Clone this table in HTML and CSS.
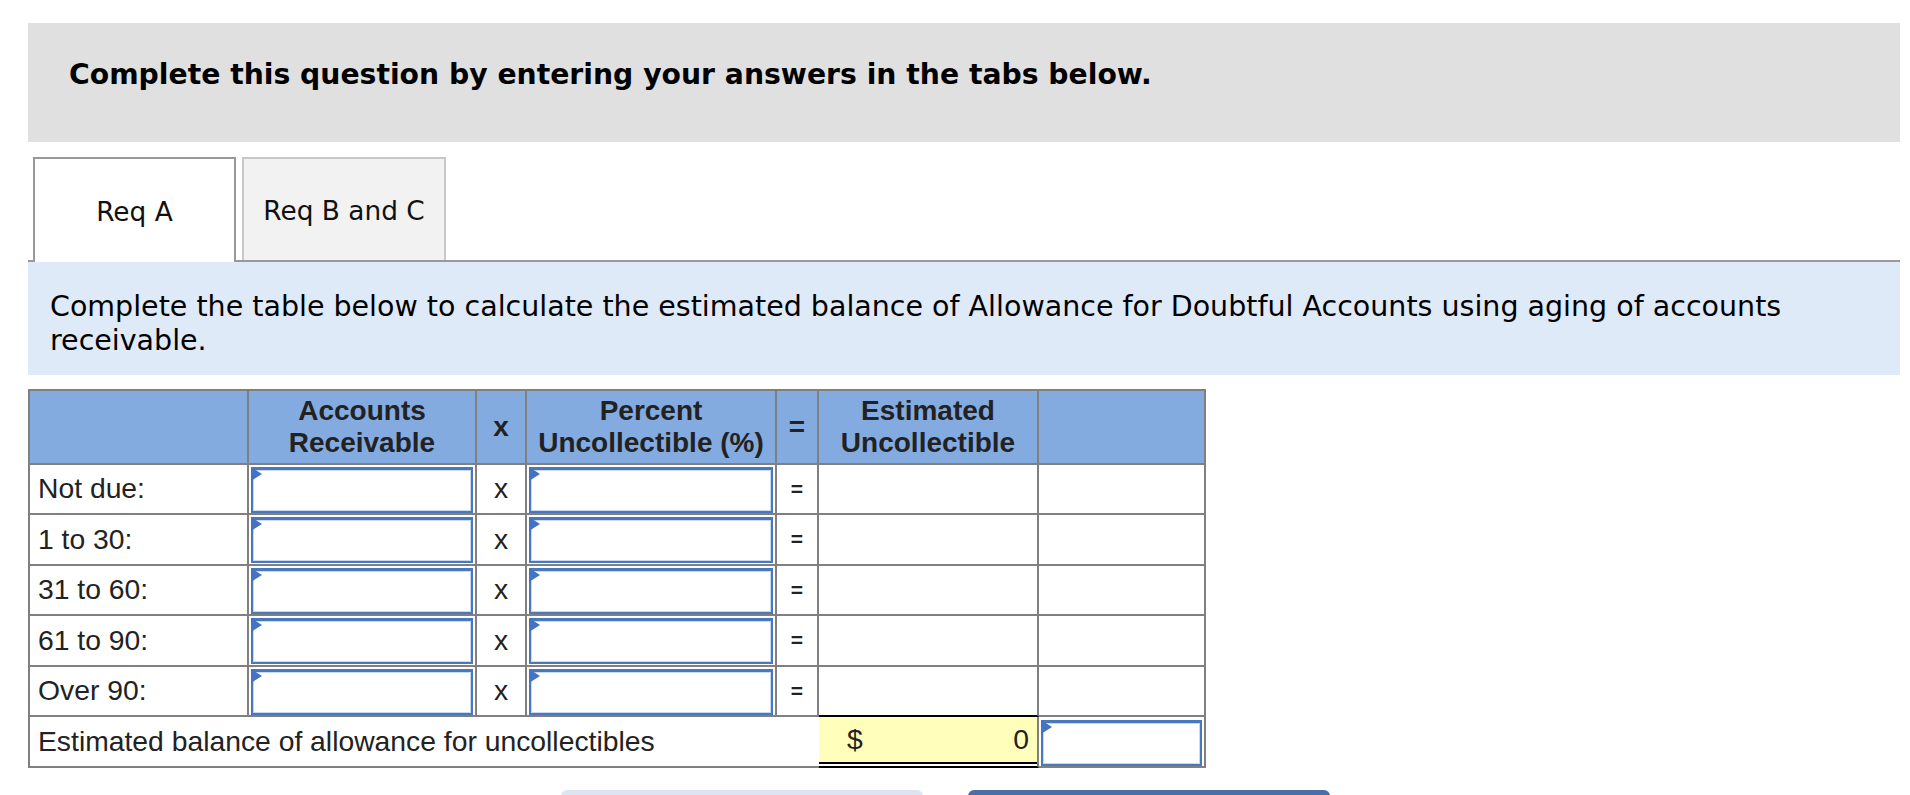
FILE: index.html
```html
<!DOCTYPE html>
<html lang="en">
<head>
<meta charset="utf-8">
<title>Aging of accounts receivable</title>
<link rel="stylesheet" href="styles.css">
</head>
<body>
<div class="page">
  <div class="prompt">Complete this question by entering your answers in the tabs below.</div>

  <div class="tabs">
    <div class="tab tab-active">Req A</div>
    <div class="tab tab-idle">Req B and C</div>
  </div>

  <div class="instructions">Complete the table below to calculate the estimated balance of Allowance for Doubtful Accounts using aging of accounts receivable.</div>

  <table class="aging">
    <colgroup>
      <col class="c-label"><col class="c-ar"><col class="c-op"><col class="c-pct"><col class="c-eq"><col class="c-est"><col class="c-extra">
    </colgroup>
    <thead>
      <tr>
        <th></th>
        <th>Accounts<br>Receivable</th>
        <th class="op">x</th>
        <th>Percent<br>Uncollectible (%)</th>
        <th class="op">=</th>
        <th>Estimated<br>Uncollectible</th>
        <th></th>
      </tr>
    </thead>
    <tbody>
      <tr>
        <td class="label">Not due:</td>
        <td class="entry"><div class="field"><input type="text" aria-label="Not due accounts receivable"></div></td>
        <td class="times">x</td>
        <td class="entry"><div class="field"><input type="text" aria-label="Not due percent"></div></td>
        <td class="equals">=</td>
        <td></td>
        <td></td>
      </tr>
      <tr>
        <td class="label">1 to 30:</td>
        <td class="entry"><div class="field"><input type="text" aria-label="1 to 30 accounts receivable"></div></td>
        <td class="times">x</td>
        <td class="entry"><div class="field"><input type="text" aria-label="1 to 30 percent"></div></td>
        <td class="equals">=</td>
        <td></td>
        <td></td>
      </tr>
      <tr>
        <td class="label">31 to 60:</td>
        <td class="entry"><div class="field"><input type="text" aria-label="31 to 60 accounts receivable"></div></td>
        <td class="times">x</td>
        <td class="entry"><div class="field"><input type="text" aria-label="31 to 60 percent"></div></td>
        <td class="equals">=</td>
        <td></td>
        <td></td>
      </tr>
      <tr>
        <td class="label">61 to 90:</td>
        <td class="entry"><div class="field"><input type="text" aria-label="61 to 90 accounts receivable"></div></td>
        <td class="times">x</td>
        <td class="entry"><div class="field"><input type="text" aria-label="61 to 90 percent"></div></td>
        <td class="equals">=</td>
        <td></td>
        <td></td>
      </tr>
      <tr>
        <td class="label">Over 90:</td>
        <td class="entry"><div class="field"><input type="text" aria-label="Over 90 accounts receivable"></div></td>
        <td class="times">x</td>
        <td class="entry"><div class="field"><input type="text" aria-label="Over 90 percent"></div></td>
        <td class="equals">=</td>
        <td class="above-total"></td>
        <td></td>
      </tr>
      <tr class="total-row">
        <td class="label total-label" colspan="5">Estimated balance of allowance for uncollectibles</td>
        <td class="total-value"><div class="amount"><span>$</span><span>0</span></div></td>
        <td class="entry"><div class="field"><input type="text" aria-label="Total"></div></td>
      </tr>
    </tbody>
  </table>

  <div class="buttons">
    <div class="btn btn-light"></div>
    <div class="btn btn-primary"></div>
  </div>
</div>
</body>
</html>
```

FILE: styles.css
```css
* {
  box-sizing: border-box;
}

html,
body {
  margin: 0;
  overflow: hidden;
  background: #fff;
}

body {
  font-family: "DejaVu Sans", Verdana, sans-serif;
  color: #000;
}

.page {
  width: 1872px;
  margin-left: 28px;
  padding-top: 23px;
}

/* Gray question banner */
.prompt {
  height: 119px;
  background: #e0e0e0;
  padding: 35px 0 0 41px;
  font-size: 28.25px;
  font-weight: bold;
  line-height: 34px;
}

/* Tabs */
.tabs {
  display: flex;
  align-items: flex-start;
  gap: 6px;
  height: 105px;
  margin-top: 15px;
  padding-left: 5px;
  border-bottom: 2px solid #999;
}

.tab {
  display: flex;
  align-items: center;
  justify-content: center;
  font-size: 26.4px;
  color: #111;
  padding-top: 2px;
}

.tab-active {
  width: 203px;
  height: 105px;
  background: #fff;
  border: 2px solid #999;
  border-bottom: none;
}

.tab-idle {
  width: 204px;
  height: 103px;
  background: #f2f2f2;
  border: 2px solid #c8c8c8;
  border-bottom: none;
}

/* Instructions */
.instructions {
  height: 113px;
  background: #deeaf8;
  padding: 28px 60px 0 22px;
  font-size: 28.5px;
  line-height: 34px;
}

/* Table */
.aging {
  margin-top: 14px;
  width: 1178px;
  table-layout: fixed;
  border-collapse: separate;
  border-spacing: 0;
  border-top: 2px solid #808080;
  border-left: 2px solid #808080;
  font-family: "Liberation Sans", Arial, sans-serif;
  font-size: 28.3px;
  color: #222;
}

.c-label { width: 219px; }
.c-ar { width: 228px; }
.c-op { width: 50px; }
.c-pct { width: 250px; }
.c-eq { width: 42px; }
.c-est { width: 220px; }
.c-extra { width: 167px; }

.aging th,
.aging td {
  padding: 0;
  border-right: 2px solid #808080;
  border-bottom: 2px solid #808080;
  vertical-align: middle;
}

.aging thead tr {
  height: 73.5px;
}

.aging tbody tr {
  height: 50.5px;
}

.aging th {
  background: #84abe0;
  font-weight: bold;
  font-size: 28px;
  line-height: 32px;
  text-align: center;
  color: #222;
}

.aging td.label {
  padding-left: 8px;
  white-space: nowrap;
}

.aging td.times {
  text-align: center;
}

.aging td.equals {
  text-align: center;
  font-size: 21px;
  font-weight: bold;
}

.aging td.entry {
  padding: 2px 2px 0 2px;
}

.field {
  position: relative;
  height: 46px;
}

.field::before {
  content: "";
  position: absolute;
  left: 0;
  top: 0;
  z-index: 1;
  border-left: 11px solid #4472c4;
  border-top: 7px solid transparent;
  border-bottom: 7px solid transparent;
}

.field input {
  display: block;
  width: 100%;
  height: 100%;
  margin: 0;
  padding: 0 8px;
  border: 2px solid #4a78bd;
  border-top-width: 3px;
  box-shadow: inset 0 0 0 1px #c9d9f1;
  background: #fff;
  font: inherit;
  outline: none;
}

.aging td.above-total {
  border-bottom-color: #000;
}

.aging .total-row {
  height: 51px;
}

.aging td.total-label {
  border-right: none;
}

.aging td.total-value {
  padding: 0 8px 4px 28px;
  border-bottom-color: #000;
  background: linear-gradient(to top, #fff 0, #fff 2px, #000 2px, #000 4px, #ffffbb 4px);
}

.amount {
  display: flex;
  justify-content: space-between;
}

.aging .total-row td.entry {
  padding: 2px 2px 0 2px;
}

/* Navigation buttons (cut off at the bottom) */
.buttons {
  display: flex;
  gap: 45px;
  margin-top: 22px;
  padding-left: 533px;
}

.btn {
  width: 362px;
  height: 40px;
  border-radius: 6px;
}

.btn-light {
  background: #dce6f2;
}

.btn-primary {
  background: #4a6fa8;
}
```
